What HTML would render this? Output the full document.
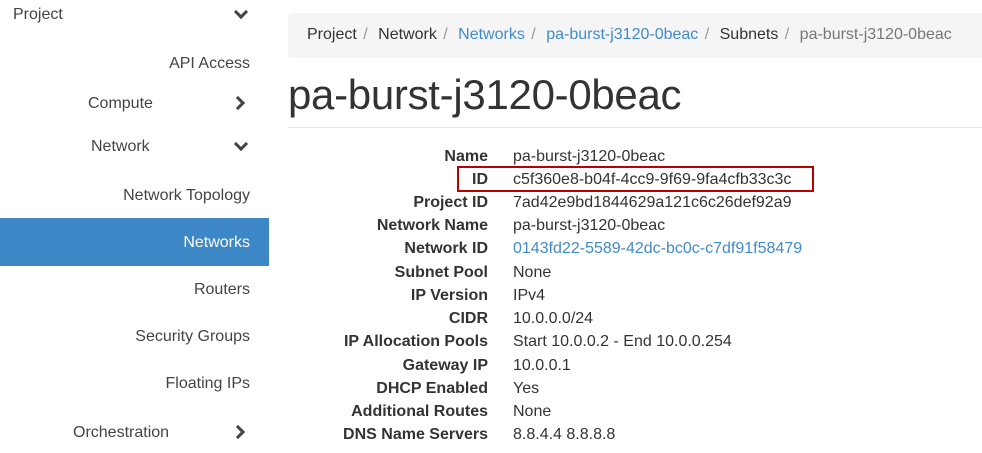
<!DOCTYPE html>
<html><head><style>
body{margin:0;width:982px;height:453px;overflow:hidden;background:#fff;font-family:"Liberation Sans",sans-serif;color:#333;position:relative}
.s{position:absolute;font-size:16px;color:#444}
.r{right:732px;text-align:right}
.chev{position:absolute;width:7px;height:7px;border-right:3.5px solid #444;border-bottom:3.5px solid #444}
.act{position:absolute;left:0;top:218px;width:269px;height:48px;background:#3e87c7}
.bc{position:absolute;left:288px;top:13px;width:700px;height:45px;background:#f5f5f5;border-radius:4px;font-size:16px;line-height:44px;padding-left:19px;box-sizing:border-box;white-space:nowrap}
.bc a{color:#428bca}.bc .sep{color:#999;padding:0 6px 0 2px}
h1{position:absolute;left:288px;top:70px;margin:0;font-weight:normal;font-size:42px;color:#333;line-height:50px;letter-spacing:-0.3px}
.hr{position:absolute;left:288px;top:127px;width:694px;height:1px;background:#e6e6e6}
.row{position:absolute;left:288px;width:694px;font-size:16px;height:23px;line-height:23px}
.row b{position:absolute;right:494px;color:#333}
.row span{position:absolute;left:225px}
.box{position:absolute;left:457px;top:166px;width:353px;height:22px;border:2px solid #b00}
</style></head><body>
<div class="s" style="left:13px;top:6px">Project</div><div class="chev" style="left:236px;top:7px;transform:rotate(45deg)"></div>
<div class="s r" style="top:55px">API Access</div>
<div class="s" style="left:88px;top:95px">Compute</div><div class="chev" style="left:233px;top:98px;transform:rotate(-45deg)"></div>
<div class="s" style="left:91px;top:138px">Network</div><div class="chev" style="left:236px;top:139px;transform:rotate(45deg)"></div>
<div class="s r" style="top:187px">Network Topology</div>
<div class="act"></div>
<div class="s r" style="top:234px;color:#fff">Networks</div>
<div class="s r" style="top:281px">Routers</div>
<div class="s r" style="top:328px">Security Groups</div>
<div class="s r" style="top:375px">Floating IPs</div>
<div class="s" style="left:73px;top:424px">Orchestration</div><div class="chev" style="left:233px;top:427px;transform:rotate(-45deg)"></div>

<div class="bc">Project<span class="sep"> /</span> Network<span class="sep"> /</span> <a>Networks</a><span class="sep"> /</span> <a>pa-burst-j3120-0beac</a><span class="sep"> /</span> Subnets<span class="sep"> /</span> <span style="color:#777">pa-burst-j3120-0beac</span></div>
<h1>pa-burst-j3120-0beac</h1>
<div class="hr"></div>
<div class="row" style="top:145px"><b>Name</b><span>pa-burst-j3120-0beac</span></div>
<div class="row" style="top:168px"><b>ID</b><span>c5f360e8-b04f-4cc9-9f69-9fa4cfb33c3c</span></div>
<div class="row" style="top:191px"><b>Project ID</b><span>7ad42e9bd1844629a121c6c26def92a9</span></div>
<div class="row" style="top:214px"><b>Network Name</b><span>pa-burst-j3120-0beac</span></div>
<div class="row" style="top:237px"><b>Network ID</b><span style="color:#428bca">0143fd22-5589-42dc-bc0c-c7df91f58479</span></div>
<div class="row" style="top:261px"><b>Subnet Pool</b><span>None</span></div>
<div class="row" style="top:284px"><b>IP Version</b><span>IPv4</span></div>
<div class="row" style="top:307px"><b>CIDR</b><span>10.0.0.0/24</span></div>
<div class="row" style="top:330px"><b>IP Allocation Pools</b><span>Start 10.0.0.2 - End 10.0.0.254</span></div>
<div class="row" style="top:354px"><b>Gateway IP</b><span>10.0.0.1</span></div>
<div class="row" style="top:377px"><b>DHCP Enabled</b><span>Yes</span></div>
<div class="row" style="top:400px"><b>Additional Routes</b><span>None</span></div>
<div class="row" style="top:423px"><b>DNS Name Servers</b><span>8.8.4.4 8.8.8.8</span></div>
<div class="box"></div>
</body></html>
